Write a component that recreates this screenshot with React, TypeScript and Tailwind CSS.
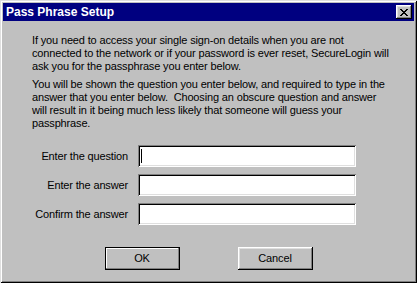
import React from 'react';

const raised =
  'shadow-[inset_-1px_-1px_#000,inset_1px_1px_#fff,inset_-2px_-2px_#808080,inset_2px_2px_#dfdfdf]';
const sunken =
  'shadow-[inset_1px_1px_#808080,inset_-1px_-1px_#fff,inset_2px_2px_#000,inset_-2px_-2px_#dfdfdf]';

const Field = ({ label, caret }: { label: string; caret?: boolean }) => (
  <div className="flex items-center">
    <div className="w-[125px] text-right whitespace-nowrap">{label}</div>
    <div className={`ml-[10px] w-[218px] h-[22px] bg-white flex items-center ${sunken}`}>
      {caret && <span className="ml-[3px] w-px h-[14px] bg-black" />}
    </div>
  </div>
);

export default function App() {
  return (
    <div
      className="w-[417px] h-[283px] bg-[#c0c0c0] p-[3px] flex flex-col text-black text-[11px] leading-[13px] tracking-[-0.15px] shadow-[inset_1px_1px_#dfdfdf,inset_-1px_-1px_#000,inset_2px_2px_#fff,inset_-2px_-2px_#808080]"
      style={{ fontFamily: '"Liberation Sans", Arial, sans-serif' }}
    >
      {/* title bar */}
      <div className="h-[18px] bg-[#000080] flex items-center justify-between pl-[3px] pr-[2px]">
        <span className="text-white font-bold text-[12px] tracking-normal">Pass Phrase Setup</span>
        <button className={`w-[16px] h-[14px] bg-[#c0c0c0] flex items-center justify-center ${raised}`}>
          <svg width="8" height="7" viewBox="0 0 8 7" shapeRendering="crispEdges">
            <path
              d="M0 0h2v1H0zM6 0h2v1H6zM1 1h2v1H1zM5 1h2v1H5zM2 2h4v1H2zM3 3h2v1H3zM2 4h4v1H2zM1 5h2v1H1zM5 5h2v1H5zM0 6h2v1H0zM6 6h2v1H6z"
              fill="#000"
            />
          </svg>
        </button>
      </div>

      {/* body */}
      <div className="flex flex-col pt-[13px]">
        <div className="pl-[29px] whitespace-nowrap">
          <p>
            If you need to access your single sign-on details when you are not
            <br />
            connected to the network or if your password is ever reset, SecureLogin will
            <br />
            ask you for the passphrase you enter below.
          </p>
          <p className="mt-[5px]">
            You will be shown the question you enter below, and required to type in the
            <br />
            answer that you enter below.&nbsp; Choosing an obscure question and answer
            <br />
            will result in it being much less likely that someone will guess your
            <br />
            passphrase.
          </p>
        </div>

        <div className="flex flex-col gap-[7px] mt-[15px]">
          <Field label="Enter the question" caret />
          <Field label="Enter the answer" />
          <Field label="Confirm the answer" />
        </div>

        <div className="flex justify-center gap-[58px] mt-[22px]">
          <button className={`w-[75px] h-[23px] bg-[#c0c0c0] border border-black ${'shadow-[inset_-1px_-1px_#808080,inset_1px_1px_#fff]'}`}>
            OK
          </button>
          <button className={`w-[75px] h-[23px] bg-[#c0c0c0] ${raised}`}>Cancel</button>
        </div>
      </div>
    </div>
  );
}
